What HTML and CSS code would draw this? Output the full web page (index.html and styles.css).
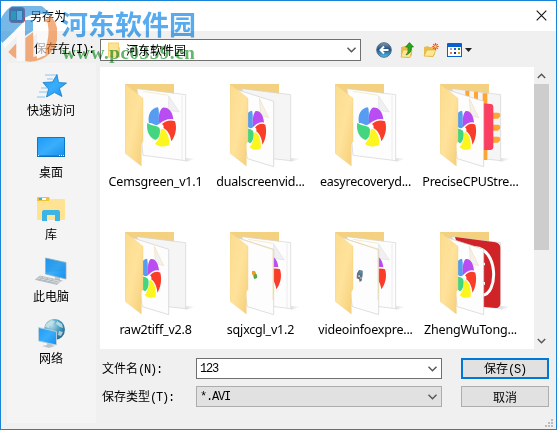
FILE: index.html
```
<!DOCTYPE html>
<html lang="zh-CN">

<head>
  <meta charset="UTF-8">
  <title>另存为</title>
  <link rel="stylesheet" href="styles.css">
</head>

<body>
  <!-- 公用图形 -->
  <svg class="defs" width="0" height="0">
    <defs>
      <linearGradient id="flap" x1="0" y1="0" x2="1" y2="1">
        <stop offset="0" stop-color="#fbdc8e" />
        <stop offset=".5" stop-color="#ffe29b" />
        <stop offset="1" stop-color="#f5cf78" />
      </linearGradient>
      <linearGradient id="blue" x1="0" y1="0" x2="1" y2="1">
        <stop offset="0" stop-color="#1e9bf5" />
        <stop offset=".5" stop-color="#3aaefc" />
        <stop offset="1" stop-color="#1590ee" />
      </linearGradient>
      <radialGradient id="globe" cx=".35" cy=".3" r=".8">
        <stop offset="0" stop-color="#b9deea" />
        <stop offset=".5" stop-color="#4a9fc4" />
        <stop offset="1" stop-color="#1d5f8e" />
      </radialGradient>
      <linearGradient id="ball" x1="0" y1="0" x2="0" y2="1">
        <stop offset="0" stop-color="#8a9aa8" />
        <stop offset=".45" stop-color="#1c4f82" />
        <stop offset="1" stop-color="#4fc4f2" />
      </linearGradient>
      <linearGradient id="shade" x1="0" y1="0" x2="1" y2="0">
        <stop offset="0" stop-color="#bbb" />
        <stop offset="1" stop-color="#fff" />
      </linearGradient>
      <g id="wheel">
        <path fill="#569cf0" d="M-10-58C-5-44-9-30-6-9Q-14-2-24-8Q-33-12-37-10C-42-34-32-56-10-58z" />
        <path fill="#b94df2" d="M-6-9C-10-30-6-50 4-57C22-59 34-44 36-22C24-26 8-20-6-9z" />
        <path fill="#fa3d28" d="M2-8C10-16 26-22 41-16C48 6 42 28 30 44C28 28 20 10 6 4z" />
        <path fill="#fdf51e" d="M4 6C18 14 26 34 23 56C8 62-10 60-19 51C-8 42-2 26-2 8z" />
        <path fill="#43d67f" d="M-5 4C-2 20-6 36-18 40C-38 32-46 8-42-12C-32-2-16-6-5 4z" />
        <circle r="7" fill="#fff" />
      </g>
      <g id="back">
        <path fill="url(#shade)" opacity=".45" d="M182 222L212 224L182 234z" />
        <path fill="#f3d180" d="M0 0H147V30L120 60H10z" />
      </g>
      <path id="front" fill="url(#flap)" stroke="#f0cd7c" stroke-width="1" d="M0 0L54 43V172L49 179V246L0 208z" />
      <g id="far">
        <path fill="#f5f5f6" stroke="#d2d2d4" stroke-width="2" d="M36 14L182 32V230L54 216z" />
      </g>
      <g id="page">
        <path fill="#fdfdfe" stroke="#d2d2d4" stroke-width="2" d="M36 14L182 32V230L54 214z" />
        <path fill="none" stroke="#f5e3b4" stroke-width="2" d="M54 22L131 34" />
        <path fill="#f0f0f2" stroke="#d8d8da" stroke-width="1.500" d="M131 36L163 84L131 79z" />
        <path fill="none" stroke="#e6e6e8" stroke-width="2" d="M171 34V230" />
      </g>
      <g id="near">
        <path fill="#fdfdfe" stroke="#cfcfd2" stroke-width="2" d="M18 16L131 52V248L52 224z" />
      </g>
      <g id="fold">
        <path fill="#f1f1f3" stroke="#f1dfaf" stroke-width="2" d="M88 43L116 101L92 94z" />
      </g>
    </defs>
  </svg>

  <div class="dialog">
    <div class="title">
      <svg class="title-icon" viewBox="0 0 16 16">
        <rect x=".7" y=".7" width="14.600" height="14.600" rx="3" fill="#39435a" stroke="#d8232e" stroke-width="1.400" />
        <path fill="#2f9c78" d="M2 4h5v9H2z" />
        <path fill="#b5d7e5" d="M8 4h5v9H8z" />
      </svg>
      <span class="title-text">另存为</span>
      <svg class="close" viewBox="0 0 11 11">
        <path d="M.7.7L10.300 10.300M10.300.7L.7 10.300" fill="none" stroke="#111" stroke-width="1.100" />
      </svg>
    </div>

    <div class="bar">
      <span class="bar-label">保存在<i>(I):</i></span>
      <div class="select look">
        <svg class="look-icon" viewBox="0 0 13 16">
          <path fill="#f5d16e" d="M0 0h12v5h1v11H0z" />
          <path fill="#fde394" d="M1 1h10v14H1z" />
        </svg>
        <span>河东软件园</span>
        <svg class="arrow" viewBox="0 0 9 6"><path d="M.5.8L4.500 4.800L8.500.8" /></svg>
      </div>
      <div class="tools">
        <svg width="16" height="16" viewBox="0 0 16 16">
          <circle cx="8" cy="8" r="7.300" fill="url(#ball)" stroke="#4f6f88" />
          <path d="M12.500 8H5M8 4.500L4.500 8L8 11.500" fill="none" stroke="#fff" stroke-width="2" />
        </svg>
        <svg width="15" height="16" viewBox="0 0 15 16">
          <path fill="#e9bd4b" d="M1 5l4-1 1 1h6v8l-3 3-8-1z" />
          <path fill="#fce795" stroke="#dba935" stroke-width=".6" d="M1 15l2-7h9l-2 7.500z" />
          <path fill="#2ca51e" stroke="#187412" stroke-width=".7" d="M6 13Q9 11 8 5H5.500L9.500.6L13.500 5H11.300Q12 11 6 13z" />
        </svg>
        <svg width="16" height="16" viewBox="0 0 16 16">
          <path fill="#e9bd4b" d="M1 5l4-1 1 1h6v7l-2 3-9-1z" />
          <path fill="#fce795" stroke="#dba935" stroke-width=".6" d="M1 14l3-6h9l-3 6.500z" />
          <path d="M12.500 1v7M9.300 4.500h6.400M10.200 2.200l4.600 4.600M14.800 2.200l-4.600 4.600" stroke="#f0502b" stroke-width="1.200" />
          <circle cx="12.500" cy="4.500" r="1.300" fill="#ffd36a" />
        </svg>
        <svg width="25" height="15" viewBox="0 0 25 15">
          <path fill="#0a60cc" d="M0 1Q0 0 1 0H14Q15 0 15 1V14H0z" />
          <path fill="#fff" d="M1 4h13v9H1z" />
          <path fill="#a9a1c5" d="M3 5h2v2H3z" />
          <path fill="#1f62d6" d="M7 5h2v2H7z" />
          <path fill="#1a9138" d="M11 5h2v2h-2z" />
          <path fill="#f07855" d="M3 9h2v2H3z" />
          <path fill="#172e8e" d="M7 9h2v2H7z" />
          <path fill="#c9a41c" d="M11 9h2v2h-2z" />
          <path fill="#222" d="M18 5h7l-3.500 4z" />
        </svg>
      </div>
    </div>

    <div class="main">
      <div class="side">
        <div class="place">
          <svg viewBox="0 0 32 32">
            <path d="M10 5h12M12 9h6M6 18h6M4 22h8M2 27h8" stroke="#8cc5ec" stroke-width="1" />
            <path fill="url(#blue)" stroke="#187dc9" stroke-width=".8" d="M22 4.500L23.500 12.500L31.500 13L24.500 18.500L27 26.500L19.500 22.500L11.500 27L13.500 19L8 12.500L17.500 12z" />
          </svg>
          <span>快速访问</span>
        </div>
        <div class="place">
          <svg viewBox="0 0 32 32">
            <path fill="url(#blue)" stroke="#0b79cb" d="M2.500 5.500h27v19h-27z" />
            <path fill="#0b70bd" d="M2 23.500h28v1.500H2z" />
            <path fill="#fff" d="M3 23h1v1H3zM24 23h1v1h-1zM26 23h1v1h-1zM28 23h1v1h-1z" />
          </svg>
          <span>桌面</span>
        </div>
        <div class="place">
          <svg viewBox="0 0 32 32">
            <path fill="#f0c23c" d="M2 4Q2 3 3 3h11l1 2-1 2H2z" />
            <path fill="#fff" d="M4 4h7v2H4z" />
            <path fill="#3cb1dd" d="M4 4h3v2H4z" />
            <path fill="#fee492" d="M2 7h12l2-2h13q1 0 1 1v19q0 1-1 1H3q-1 0-1-1z" />
            <path fill="#3cb4e7" d="M7 27V18q0-2 2-2h14q2 0 2 2v9h-5v-6h-8v6z" />
          </svg>
          <span>库</span>
        </div>
        <div class="place">
          <svg viewBox="0 0 32 32">
            <path fill="#c3cad0" d="M20 20l5 1v3l4 1-7 1-6-2 4-1z" />
            <path fill="url(#blue)" stroke="#9bacb9" stroke-width=".8" d="M10.500 2L31 6.500V23L10.500 18z" />
            <path fill="#2185cc" d="M11 2.500L30.500 7V15L11 16z" opacity=".25" />
            <path fill="#d8dcdf" stroke="#9ca6ad" stroke-width=".6" d="M5 20L26 24.500L22 28.500L.5 23.500z" />
            <path stroke="#9ca6ad" stroke-width=".6" d="M3.500 21.500l20 4.500M2 23l20.500 4.500M8 21l-4 3.500M13 22l-4 3.500M18 23l-4 3.500" />
          </svg>
          <span>此电脑</span>
        </div>
        <div class="place">
          <svg viewBox="0 0 32 32">
            <circle cx="19.500" cy="11.500" r="10.500" fill="url(#globe)" />
            <path fill="#d2e8e8" d="M11 6l5-4 4 1-2 3-3 1-1 3-4-1zM22 3l5 3 1 4-3-1-4-3zM24 13l4 1-2 4-3-1z" opacity=".75" />
            <path fill="#bcc5cc" d="M12 24l5 1v2l3 1-6 2-7-2 5-1z" />
            <path fill="url(#blue)" stroke="#c1d0da" stroke-width=".9" d="M3.500 9.500L21.500 13.500V27L3.500 23z" />
          </svg>
          <span>网络</span>
        </div>
      </div>

      <div class="content">
        <div class="list">
          <div class="files">
            <div class="file">
              <svg viewBox="0 0 216 252">
                <use href="#back" /><use href="#page" />
                <use href="#wheel" x="109" y="128" />
                <use href="#front" />
              </svg>
              <span>Cemsgreen_v1.1</span>
            </div>
            <div class="file">
              <svg viewBox="0 0 216 252">
                <use href="#back" /><use href="#far" /><use href="#near" /><use href="#fold" />
                <use href="#wheel" transform="translate(74 138) scale(.78 1)" />
                <use href="#front" />
              </svg>
              <span>dualscreenvid...</span>
            </div>
            <div class="file">
              <svg viewBox="0 0 216 252">
                <use href="#back" /><use href="#page" />
                <use href="#wheel" x="109" y="128" />
                <use href="#front" />
              </svg>
              <span>easyrecoveryd...</span>
            </div>
            <div class="file">
              <svg viewBox="0 0 216 252">
                <use href="#back" /><use href="#far" />
                <path fill="#ffa530" d="M76 20h12v25H76zM102 23h12v25h-12zM128 28h14v200h-14zM150 86h24q7 0 7 8t-7 10h-24zM150 122h24q7 0 7 8t-7 10h-24zM150 158h24q7 0 7 8t-7 10h-24z" />
                <path fill="#fb3f60" d="M125 58l28 2q7 1 7 8v122q0 7-7 8h-28z" />
                <use href="#near" /><use href="#fold" />
                <use href="#wheel" transform="translate(74 138) scale(.78 1)" />
                <use href="#front" />
              </svg>
              <span>PreciseCPUStre...</span>
            </div>
            <div class="file">
              <svg viewBox="0 0 216 252">
                <use href="#back" /><use href="#far" /><use href="#near" /><use href="#fold" />
                <use href="#wheel" transform="translate(74 138) scale(.78 1)" />
                <use href="#front" />
              </svg>
              <span>raw2tiff_v2.8</span>
            </div>
            <div class="file">
              <svg viewBox="0 0 216 252">
                <use href="#back" /><use href="#page" />
                <use href="#wheel" x="109" y="128" />
                <use href="#near" />
                <path fill="none" stroke="#f1d898" stroke-width="2" d="M36 22L129 53V205" />
                <path fill="#f39a20" d="M66 118q8-5 11 3v14q-8-2-11-9z" />
                <path fill="#58a948" d="M76 124q8 4 5 14l-8 4-3-8z" />
                <use href="#front" />
              </svg>
              <span>sqjxcgl_v1.2</span>
            </div>
            <div class="file">
              <svg viewBox="0 0 216 252">
                <use href="#back" /><use href="#page" />
                <use href="#wheel" x="109" y="128" />
                <use href="#near" />
                <path fill="none" stroke="#f1d898" stroke-width="2" d="M36 22L129 53V205" />
                <path fill="#66727b" d="M66 124l6-10 11 2v12l-3 18-6 4-2-8-7-3z" />
                <path fill="#3495cd" d="M73 116h8v8h-8z" />
                <path fill="#c9cfd2" d="M70 130h5v5h-5zM76 136h4v4h-4z" />
                <use href="#front" />
              </svg>
              <span>videoinfoexpre...</span>
            </div>
            <div class="file">
              <svg viewBox="0 0 216 252">
                <use href="#back" /><use href="#far" />
                <path fill="#cf2328" d="M45 15L166 31Q181 34 181 48V214Q181 229 166 228L110 223z" />
                <path fill="none" stroke="#fff" stroke-width="9" d="M105 47C176 48 176 191 124 190" />
                <path fill="#fff" d="M128 92h7v8h-7zM128 150h7v8h-7z" />
                <use href="#near" /><use href="#fold" />
                <use href="#wheel" transform="translate(74 138) scale(.78 1)" />
                <use href="#front" />
              </svg>
              <span>ZhengWuTong...</span>
            </div>
          </div>
          <div class="scroll">
            <svg viewBox="0 0 9 6"><path d="M.8 5L4.500 1.300L8.200 5" /></svg>
            <div class="thumb"></div>
            <svg viewBox="0 0 9 6"><path d="M.8 1L4.500 4.700L8.200 1" /></svg>
          </div>
        </div>

        <div class="form">
          <label>文件名<i>(N):</i></label>
          <div class="select name">
            <i>123</i>
            <svg class="arrow" viewBox="0 0 9 6"><path d="M.5.8L4.500 4.800L8.500.8" /></svg>
          </div>
          <button class="btn save">保存<i>(S)</i></button>
          <label>保存类型<i>(T):</i></label>
          <div class="select type">
            <i>*.AVI</i>
            <svg class="arrow" viewBox="0 0 9 6"><path d="M.5.8L4.500 4.800L8.500.8" /></svg>
          </div>
          <button class="btn">取消</button>
        </div>
      </div>
    </div>

    <svg class="grip" viewBox="0 0 8 8">
      <path fill="#bcbcbc" d="M6 0h2v2H6zM3 3h2v2H3zM6 3h2v2H6zM0 6h2v2H0zM3 6h2v2H3zM6 6h2v2H6z" />
    </svg>

    <!-- 水印 -->
    <svg class="mark-logo" viewBox="0 0 168 168">
      <path fill="#2d94dc" d="M4 112A83 83 0 0 1 150 30Q100 12 60 44Q30 70 4 112z" />
      <path fill="#2d94dc" d="M4 112L70 46V16L20 40zM72 42H96V74L72 90z" />
      <path fill="#f0843a" d="M150 30A83 83 0 0 1 73 166V96L97 78V152L134 148V70Q128 52 110 58Q140 36 150 30zM22 138L46 112V158Q32 150 22 138z" />
      <path class="white" fill="#fff" d="M3 112L71 50V164H47V90L12 126zM97 66Q118 36 140 50Q148 92 132 128V148L108 158V80L97 92z" />
    </svg>
    <div class="mark mark-name">河东软件园</div>
    <div class="mark mark-url">www.pc0359.cn</div>
  </div>
</body>

</html>
```
FILE: styles.css
```
body {
  margin: 0;
}

i {
  font: 12px "Liberation Mono", monospace;
  letter-spacing: -1.2px;
}

svg {
  display: block;
  flex: none;
}

.defs {
  position: absolute;
}

.dialog {
  position: relative;
  box-sizing: border-box;
  width: 557px;
  height: 430px;
  border: 1px solid #1883d7;
  background-color: #f0f0f0;
  color: #000;
  font: 12px/16px "Noto Sans CJK SC", sans-serif;
  overflow: hidden;
}

.title {
  display: flex;
  align-items: center;
  height: 30px;
  padding: 0 9px 0 8px;
  background-color: #fff;
}

.title-icon {
  width: 16px;
  height: 16px;
  margin: -3px 5px 0 0;
}

.title-text {
  margin-top: -1px;
}

.close {
  width: 11px;
  height: 11px;
  margin-left: auto;
  margin-top: -2px;
}

.bar {
  display: flex;
  align-items: center;
  box-sizing: border-box;
  height: 32px;
  padding: 6px 0 0 33px;
}

.bar-label {
  width: 66px;
  margin-top: -4px;
  white-space: nowrap;
}

.select {
  display: flex;
  align-items: center;
  box-sizing: border-box;
  border: 1px solid #707070;
  background-color: #fff;
}

.arrow {
  width: 9px;
  height: 6px;
  margin-left: auto;
}

.arrow path,
.scroll path {
  fill: none;
  stroke: #555;
  stroke-width: 1.4;
}

.look {
  width: 261px;
  height: 22px;
  padding: 0 4px 0 7px;
}

.look-icon {
  width: 12px;
  height: 16px;
  margin-right: 6px;
}

.tools {
  display: flex;
  align-items: center;
  margin-left: 15px;
  gap: 8px;
}

.main {
  display: flex;
  padding-left: 6px;
}

.side {
  box-sizing: border-box;
  width: 89px;
  height: 360px;
  margin-right: 4px;
  padding-top: 7px;
  background-color: #f4f4f4;
}

.place {
  display: flex;
  flex-direction: column;
  align-items: center;
  height: 62px;
  margin-right: 1px;
}

.place svg {
  width: 32px;
  height: 32px;
}

.content {
  width: 449px;
  padding-top: 4px;
}

.list {
  display: flex;
  height: 282px;
}

.files {
  display: grid;
  grid-template-columns: repeat(4, 105px);
  grid-auto-rows: 148px;
  width: 430px;
  height: 265px;
  padding: 17px 0 0 4px;
  background-color: #fff;
  overflow: hidden;
}

.file {
  display: flex;
  flex-direction: column;
  align-items: center;
}

.file svg {
  width: 72px;
  height: 84px;
  margin-left: 9px;
}

.file span {
  margin: 5px 2px 0 0;
  font: 12.5px/18px "Noto Sans", "Noto Sans CJK SC", sans-serif;
  letter-spacing: -0.2px;
  white-space: nowrap;
}

.scroll {
  display: flex;
  flex-direction: column;
  align-items: center;
  width: 15px;
}

.scroll svg {
  width: 9px;
  height: 6px;
  margin: 6px 0 5px;
}

.scroll svg:last-child {
  margin: auto 0 5px;
}

.thumb {
  width: 15px;
  height: 166px;
  background-color: #cdcdcd;
}

.form {
  display: grid;
  grid-template-columns: 94px 246px 107px;
  grid-template-rows: 21px 21px;
  row-gap: 7px;
  padding: 9px 0 0 2px;
  align-items: center;
}

.name,
.type {
  height: 21px;
  padding: 0 4px 0 3px;
}

.type {
  border-color: #adadad;
  background-color: #e1e1e1;
}

.btn {
  box-sizing: border-box;
  width: 88px;
  height: 21px;
  margin-left: 19px;
  padding: 0;
  border: 1px solid #adadad;
  background-color: #e1e1e1;
  color: #000;
  font: 12px/16px "Noto Sans CJK SC", sans-serif;
}

.save {
  border: 2px solid #0078d7;
}

.grip {
  position: absolute;
  right: 3px;
  bottom: 2px;
  width: 8px;
  height: 8px;
}

.mark-logo {
  position: absolute;
  left: 0;
  top: 5px;
  width: 56px;
  height: 56px;
  opacity: 0.65;
}

.mark {
  position: absolute;
  mix-blend-mode: multiply;
  opacity: 0.75;
  white-space: nowrap;
}

.mark-name {
  left: 60px;
  top: 7px;
  color: #1e8fe8;
  font: bold 27px/32px "Noto Sans CJK SC", sans-serif;
}

.mark-url {
  left: 61px;
  top: 41px;
  color: #2f9c3a;
  font: bold 19px/22px "Liberation Serif", serif;
  letter-spacing: 0.6px;
}
```
